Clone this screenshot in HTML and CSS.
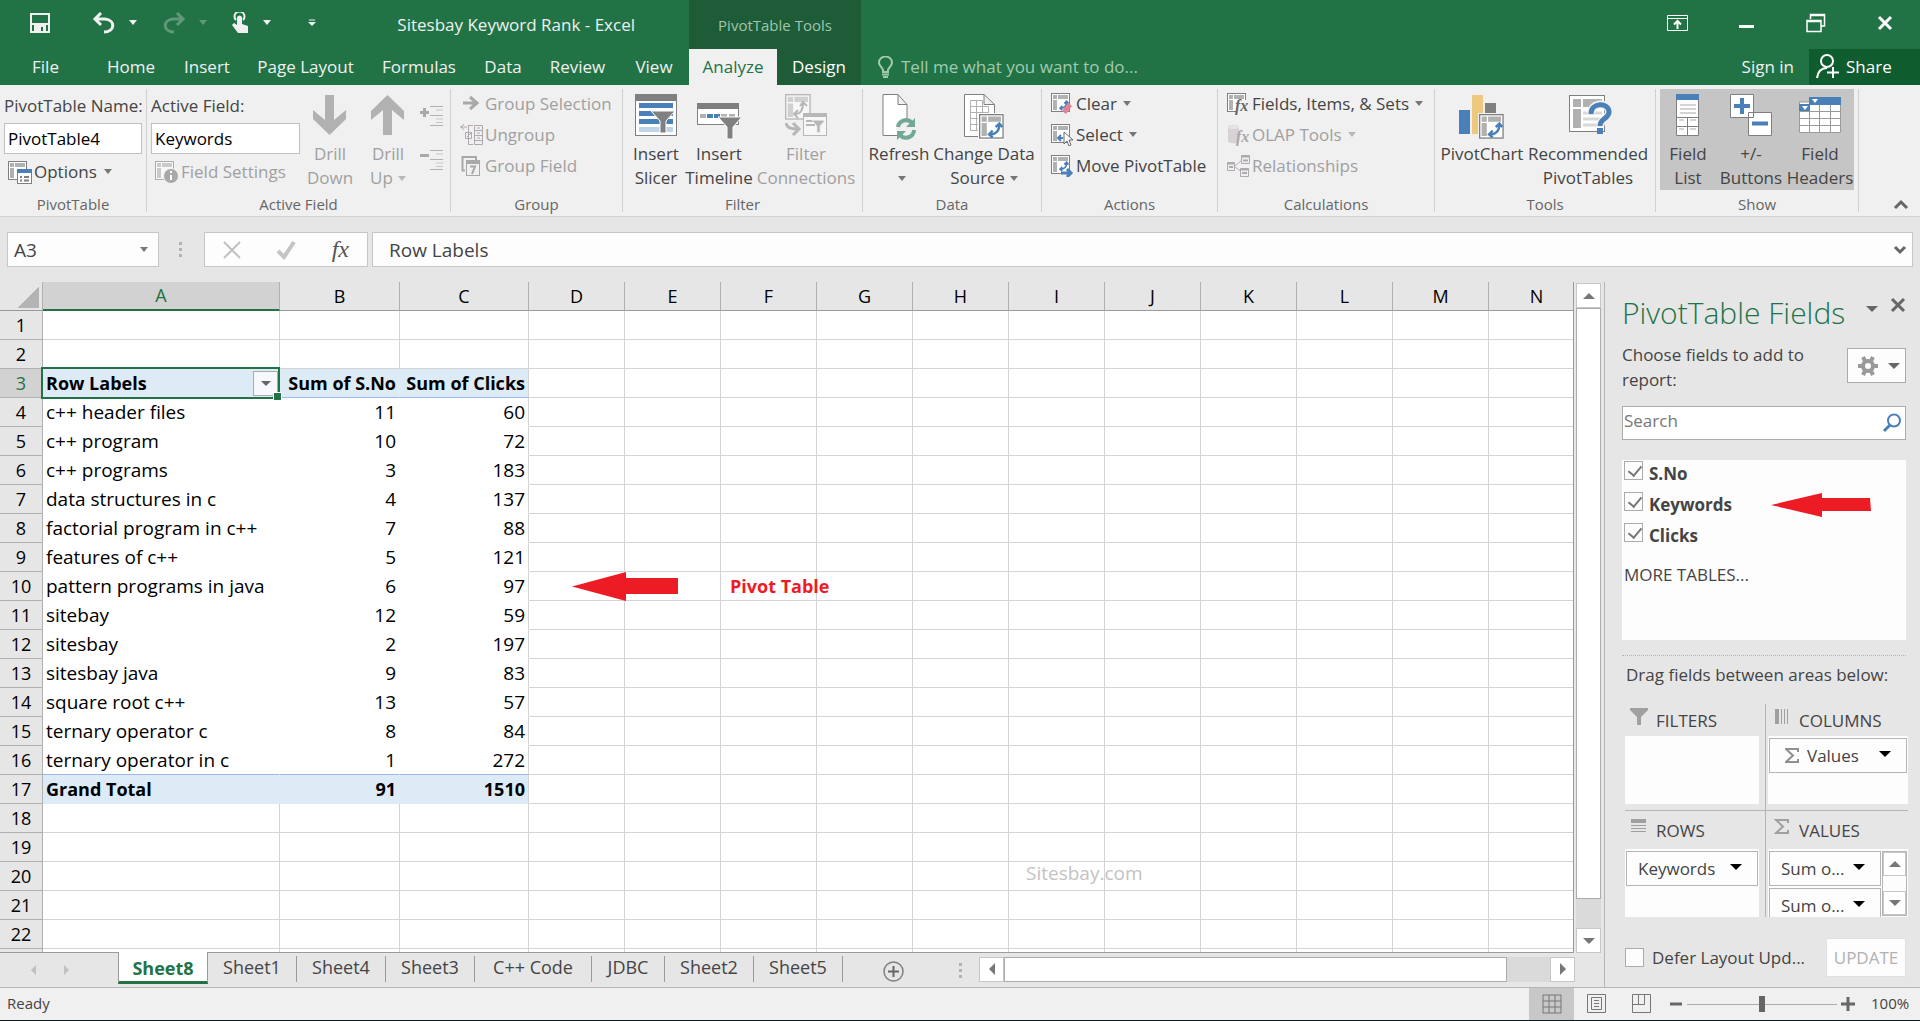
FILE: index.html
```html
<!DOCTYPE html>
<html lang="en">

<head>
    <meta charset="UTF-8">
    <meta name="viewport" content="width=device-width, initial-scale=1.0">
    <title>Sitesbay Keyword Rank - Excel</title>
    <link rel="stylesheet" href="styles.css">
</head>

<body>
    <!-- shared icon parts -->
    <svg class="defs" width="0" height="0">
        <symbol id="pivot" viewBox="0 0 20 20">
            <rect x="0.5" y="0.5" width="18" height="18" fill="#fff" stroke="#7f7f7f" />
            <path d="M2 2h4v4h-4zM7 2h10v4h-10zM2 7h4v10h-4z" fill="#b1b1b1" />
        </symbol>
        <symbol id="swap" viewBox="0 0 14 14">
            <path d="M3 11C8 11 11 8 11 3M5.500 8L2.500 11L5.500 13.500M8 5L11 2L13.500 5" fill="none" stroke="#4a80b8" stroke-width="2" />
        </symbol>
        <symbol id="funnel" viewBox="0 0 24 24">
            <path d="M0 1H24L15 11V23H9V11Z" fill="#808080" stroke="#fff" stroke-width="1" />
        </symbol>
    </svg>

    <header class="titlebar">
        <div class="quick">
            <button class="qbtn save" aria-label="Save"><svg width="20" height="20"><path d="M1 1H19V19H1ZM1 11H19" fill="none" stroke="#f0f0f0" stroke-width="2" /><path d="M4 12H16V19H13V14H11V19H4Z" fill="#f0f0f0" /></svg></button>
            <button class="qbtn" aria-label="Undo"><svg width="24" height="22"><path d="M3 7H13C24 8 23 20 12 20M9 1L3 7L9 13" fill="none" stroke="#f0f0f0" stroke-width="3" /></svg><i class="caret"></i></button>
            <button class="qbtn faded" aria-label="Redo"><svg width="24" height="22"><path d="M21 7H11C0 8 1 20 12 20M15 1L21 7L15 13" fill="none" stroke="#f0f0f0" stroke-width="3" /></svg><i class="caret"></i></button>
            <button class="qbtn" aria-label="Touch mode"><svg width="18" height="22"><path d="M4 8A5 5 0 1 1 11 8" fill="none" stroke="#f0f0f0" stroke-width="2" /><path d="M5 5Q7.500 2 10 5V12L16 14V21H6L0 13L2 11L5 13Z" fill="#f0f0f0" /></svg><i class="caret"></i></button>
            <button class="qbtn more" aria-label="Customize toolbar"><svg width="8" height="8"><path d="M1 1H7" stroke="#f0f0f0" stroke-width="1" /><path d="M0 3H8L4 7Z" fill="#f0f0f0" /></svg></button>
            <span class="doc-title">Sitesbay Keyword Rank - Excel</span>
        </div>
        <div class="context">PivotTable Tools</div>
        <div class="window-buttons">
            <button aria-label="Ribbon display"><svg width="21" height="16"><path d="M0.500 0.500H20.500V15.500H0.500ZM0 3.500H20" fill="none" stroke="#fff" /><path d="M10.500 14V6M7 9.500L10.500 6L14 9.500" fill="none" stroke="#fff" stroke-width="2" /></svg></button>
            <button aria-label="Minimize"><svg width="20" height="20"><rect x="2" y="12" width="15" height="3" fill="#fff" /></svg></button>
            <button aria-label="Restore"><svg width="20" height="20"><path d="M4.500 6V1.500H18.500V13H15M1 7.500H15V18.500H1ZM4 2.500H18M1 8.500H15" fill="none" stroke="#fff" stroke-width="1.500" /></svg></button>
            <button aria-label="Close"><svg width="20" height="20"><path d="M4 4L16 16M16 4L4 16" stroke="#fff" stroke-width="3" /></svg></button>
        </div>
    </header>

    <nav class="tabs">
        <div class="tab-list">
            <button>File</button>
            <button>Home</button>
            <button>Insert</button>
            <button>Page Layout</button>
            <button>Formulas</button>
            <button>Data</button>
            <button>Review</button>
            <button>View</button>
            <button class="current">Analyze</button>
            <button class="contextual">Design</button>
        </div>
        <label class="tell-me"><svg width="15" height="22"><path d="M5 16V14C4 11 1 10 1 6.500A6 5.500 0 0 1 14 6.500C14 10 11 11 10 14V16Z" fill="none" stroke="#a0cbb0" stroke-width="2" /><path d="M4 18.500H11M5 21H10" stroke="#a0cbb0" stroke-width="2" /></svg><input type="text" placeholder="Tell me what you want to do..."></label>
        <button class="sign-in">Sign in</button>
        <button class="share"><svg width="24" height="25"><ellipse cx="11" cy="7" rx="6" ry="6" fill="none" stroke="#fff" stroke-width="2" /><path d="M1 24C2 17 5 14 11 14M17 13V24M11 18.500H23" fill="none" stroke="#fff" stroke-width="2" /></svg>Share</button>
    </nav>

    <section class="ribbon">
        <div class="group g-pivot">
            <div class="body">
                <div class="stack">
                    <label for="pt-name">PivotTable Name:</label>
                    <input id="pt-name" type="text" value="PivotTable4">
                    <button class="small"><svg width="24" height="24"><use href="#pivot" width="20" height="22" /><rect x="9.500" y="9.500" width="14" height="14" fill="#fff" stroke="#7f7f7f" /><rect x="9" y="9" width="15" height="4" fill="#4a80b8" /><path d="M12 17H14M16 17H21M12 20.500H14M16 20.500H21" stroke="#7f7f7f" stroke-width="2" /></svg>Options<i class="caret"></i></button>
                </div>
            </div>
            <h2>PivotTable</h2>
        </div>

        <div class="group g-active">
            <div class="body">
                <div class="stack">
                    <label for="active-field">Active Field:</label>
                    <input id="active-field" type="text" value="Keywords">
                    <button class="small" disabled><svg width="24" height="24"><g opacity="0.6"><use href="#pivot" width="20" height="22" /></g><circle cx="16" cy="16" r="8" fill="#f0f0f0" /><circle cx="16" cy="16" r="7" fill="#a8a8a8" /><path d="M16 11V13M16 15V20" stroke="#fff" stroke-width="2" /></svg>Field Settings</button>
                </div>
                <button class="big w60" disabled><svg width="34" height="42"><path d="M12 1H21V26L33 16V25L16.500 41L0 25V16L12 26Z" fill="#b1b1b1" /></svg>Drill<br>Down</button>
                <button class="big w56" disabled><svg width="34" height="42"><path d="M12 41H21V16L33 26V17L16.500 1L0 17V26L12 16Z" fill="#b1b1b1" /></svg>Drill<br>Up<i class="caret"></i></button>
                <div class="levels">
                    <button aria-label="Expand field" disabled><svg width="24" height="20"><path d="M0 6.500H9M4.500 2V11" stroke="#a8a8a8" stroke-width="3" /><path d="M10 0.500H23M10 9.500H23M10 19.500H23" stroke="#b1b1b1" /><path d="M16 4H23M16 13H23M16 16.500H23" stroke="#c8c8c8" /></svg></button>
                    <button aria-label="Collapse field" disabled><svg width="24" height="20"><path d="M0 5.500H9" stroke="#a8a8a8" stroke-width="3" /><path d="M10 0.500H23M10 9.500H23M10 19.500H23" stroke="#b1b1b1" /><path d="M16 4H23M16 13H23M16 16.500H23" stroke="#c8c8c8" /></svg></button>
                </div>
            </div>
            <h2>Active Field</h2>
        </div>

        <div class="group g-group">
            <div class="body rows">
                <button class="small" disabled><svg width="24" height="22"><path d="M3 10H17M10 4L17 10L10 16" fill="none" stroke="#a8a8a8" stroke-width="3" /></svg>Group Selection</button>
                <button class="small" disabled><svg width="24" height="22"><path d="M0 3H7M4 0L1 3L4 6M8 1.500H13M8.500 1V20.500H13M5.500 8.500H11.500V14.500H5.500ZM7 13L11 9M14.500 1.500H22.500V20.500H14.500ZM14 6.500H22M14 11.500H22M14 16.500H22M17 4H20M17 9H20M17 14H20" fill="none" stroke="#b0a8b0" /></svg>Ungroup</button>
                <button class="small" disabled><svg width="24" height="22"><path d="M2.500 1V15.500H5M2 2H16V5" fill="none" stroke="#a8a8a8" stroke-width="2" /><rect x="6.500" y="5.500" width="13" height="15" fill="#f0f0f0" stroke="#a8a8a8" /><rect x="6" y="5" width="14" height="4" fill="#a8a8a8" /><path d="M10 11.500H15L12 19" fill="none" stroke="#a8a8a8" stroke-width="2" /></svg>Group Field</button>
            </div>
            <h2>Group</h2>
        </div>

        <div class="group g-filter">
            <div class="body">
                <button class="big w56"><svg width="42" height="44"><rect x="0.500" y="0.500" width="41" height="41" fill="#fff" stroke="#7f7f7f" /><rect width="42" height="7" fill="#7f7f7f" /><path d="M4 11.500H38M4 19.500H38M4 27.500H38" stroke="#4a80b8" stroke-width="5" /><path d="M4 35.500H38" stroke="#c0d4e8" stroke-width="5" /><use href="#funnel" x="16" y="16" width="24" height="24" /></svg>Insert<br>Slicer</button>
                <button class="big w70"><svg width="44" height="48"><rect x="0.500" y="9.500" width="41" height="21" fill="#fff" stroke="#7f7f7f" /><rect y="9" width="42" height="6" fill="#7f7f7f" /><path d="M3 22H9M24 22H30M32 22H38" stroke="#b1b1b1" stroke-width="4" /><path d="M10 22H16M17 22H23" stroke="#4a80b8" stroke-width="4" /><use href="#funnel" x="21" y="22" width="24" height="24" /></svg>Insert<br>Timeline</button>
                <button class="big w104" disabled><svg width="42" height="42" class="pale"><use href="#pivot" width="27" height="27" /><path d="M10 20C16 20 18 16 18 9M13 16L9 20L13 24M15 12L18 8L22 12" fill="none" stroke="#808080" stroke-width="2" /><rect x="18.500" y="19.500" width="23" height="22" fill="#fff" stroke="#7f7f7f" /><rect x="18" y="19" width="24" height="4" fill="#7f7f7f" /><path d="M21 27H38M21 31H30" stroke="#7f7f7f" stroke-width="2" /><use href="#funnel" x="27" y="26" width="13" height="13" /><path d="M1 29C2 34 6 35 14 35M8 29L14 35L8 41" fill="none" stroke="#7f7f7f" stroke-width="3" /></svg>Filter<br>Connections</button>
            </div>
            <h2>Filter</h2>
        </div>

        <div class="group g-data">
            <div class="body">
                <button class="big w62"><svg width="34" height="46"><path d="M1 0.500H16L25 10.500V41.500H1ZM16 0.500V10.500H25" fill="#fff" stroke="#7f7f7f" /><circle cx="24" cy="35" r="10" fill="#f0f0f0" /><path d="M16 33A8 8 0 0 1 30 29M32 36A8 8 0 0 1 18 41" fill="none" stroke="#72a896" stroke-width="4" /><path d="M33 24V33H24ZM15 46V37H24Z" fill="#72a896" /></svg>Refresh<br><i class="caret"></i></button>
                <button class="big w108"><svg width="40" height="46"><path d="M0.500 0.500H20L30.500 10.500V42.500H0.500ZM20 0.500V10.500H30" fill="#fff" stroke="#7f7f7f" /><path d="M6.500 6.500H18.500V36.500H6.500ZM6 12.500H24.500V36M6 18.500H24M6 24.500H24M6 30.500H24M12.500 6V36" fill="none" stroke="#b1b1b1" /><rect x="14" y="19" width="26" height="27" fill="#fff" /><use href="#pivot" x="15" y="20" width="26" height="26" /><use href="#swap" x="22" y="27" width="17" height="17" /></svg>Change Data<br>Source<i class="caret"></i></button>
            </div>
            <h2>Data</h2>
        </div>

        <div class="group g-actions">
            <div class="body rows">
                <button class="small"><svg width="24" height="22"><use href="#pivot" width="20" height="20" /><use href="#swap" x="7" y="6" width="11" height="12" /><path d="M11 18L17 10L21 13L15 21Z" fill="#e68094" /></svg>Clear<i class="caret"></i></button>
                <button class="small"><svg width="24" height="22"><use href="#pivot" width="20" height="20" /><path d="M12 14H7M10 11L7 14L10 17" fill="none" stroke="#4a80b8" stroke-width="2" /><path d="M13 8V20L16 17L18 22L20 21L18 16H22Z" fill="#fff" stroke="#666" /></svg>Select<i class="caret"></i></button>
                <button class="small"><svg width="24" height="22"><use href="#pivot" width="20" height="20" /><use href="#swap" x="7" y="5" width="11" height="12" /><path d="M10 18H20M16 14L20 18L16 22" fill="none" stroke="#4a80b8" stroke-width="3" /></svg>Move PivotTable</button>
            </div>
            <h2>Actions</h2>
        </div>

        <div class="group g-calc">
            <div class="body rows">
                <button class="small"><svg width="24" height="22"><use href="#pivot" width="20" height="20" /><rect x="9" y="7" width="12" height="14" fill="#f0f0f0" /><text x="8" y="18" class="fx">fx</text></svg>Fields, Items, &amp; Sets<i class="caret"></i></button>
                <button class="small" disabled><svg width="24" height="22"><path d="M1 3C1 0 12 0 12 3V17C12 20 1 20 1 17Z" fill="#d6d2d6" /><ellipse cx="6.500" cy="3" rx="5.500" ry="2" fill="#e6e2e6" /><text x="9" y="18" class="fx">fx</text></svg>OLAP Tools<i class="caret"></i></button>
                <button class="small" disabled><svg width="24" height="22"><path d="M8 11L15 5M8 12L15 17" stroke="#b8b0b8" /><path d="M0.500 7.500H7.500V15.500H0.500ZM14.500 0.500H22.500V8.500H14.500ZM13.500 13.500H21.500V21.500H13.500Z" fill="#f0f0f0" stroke="#b0a8b0" /><path d="M0 8.500H8M14 1.500H23M13 14.500H22M2 12H6M16 5.500H21M15 18H20" stroke="#b0a8b0" stroke-width="2" /></svg>Relationships</button>
            </div>
            <h2>Calculations</h2>
        </div>

        <div class="group g-tools">
            <div class="body">
                <button class="big w86"><svg width="46" height="46"><rect y="16" width="11" height="24" fill="#4a80b8" /><rect x="13" y="1" width="11" height="39" fill="#edc87e" /><rect x="26" y="9" width="11" height="12" fill="#808080" /><rect x="19" y="19" width="26" height="27" fill="#f0f0f0" /><use href="#pivot" x="20" y="20" width="26" height="26" /><use href="#swap" x="27" y="27" width="17" height="17" /></svg>PivotChart<br>&nbsp;</button>
                <button class="big w126"><svg width="38" height="46"><rect x="0.500" y="1.500" width="35" height="36" fill="#fff" stroke="#7f7f7f" /><path d="M4 5H12V13H4ZM14 5H33V13H14ZM4 15H12V34H4Z" fill="#b1b1b1" /><path d="M14 19H33M14 25H33M14 31H30" stroke="#d8d8d8" stroke-width="3" /></svg>Recommended<br>PivotTables
                    <svg class="question" width="26" height="34"><path d="M4 14C4 1 22 2 22 12C22 19 13 18 13 27" fill="none" stroke="#f0f0f0" stroke-width="8" /><path d="M4 14C4 2 22 2 22 12C22 19 13 18 13 26" fill="none" stroke="#4a80b8" stroke-width="5" /><rect x="10" y="28" width="6" height="6" fill="#4a80b8" /></svg></button>
            </div>
            <h2>Tools</h2>
        </div>

        <div class="group g-show">
            <div class="body">
                <button class="big toggled w56"><svg width="24" height="42"><path d="M0.500 0.500H22.500V41.500H0.500ZM0 23.500H22M0 32.500H22M11.500 24V41" fill="#fff" stroke="#7f7f7f" /><rect width="23" height="6" fill="#4a80b8" /><path d="M4 11H20M4 15H20M4 19H20M3 26H8M14 26H20M3 35H8M14 35H20" stroke="#a8a8a8" /></svg>Field<br>List</button>
                <button class="big toggled w70"><svg width="42" height="42"><path d="M0.500 0.500H23.500V23.500H0.500ZM18.500 18.500H41.500V41.500H18.500Z" fill="#fff" stroke="#7f7f7f" /><path d="M4 12H20M12 4V20M22 29.500H38" stroke="#4a80b8" stroke-width="4" /></svg>+/-<br>Buttons</button>
                <button class="big toggled w68"><svg width="42" height="42"><path d="M0.500 8V38.500H41.500V4H10.500V8ZM0 17.500H41M0 24.500H41M0 31.500H41M10.500 10V38M20.500 10V38M31.500 10V38" fill="#fff" stroke="#9a9a9a" /><path d="M10 3H42V11H11V17H0V10H10Z" fill="#4a80b8" /><path d="M13 5H19L16 9ZM3 12H9L6 16Z" fill="#fff" /></svg>Field<br>Headers</button>
            </div>
            <h2>Show</h2>
        </div>
        <button class="collapse" aria-label="Collapse ribbon"><svg width="16" height="12"><path d="M2 9L8 3L14 9" fill="none" stroke="#666" stroke-width="3" /></svg></button>
    </section>

    <section class="formula-bar">
        <div class="name-box">
            <input type="text" value="A3" aria-label="Name box">
            <button aria-label="Names"><i class="caret"></i></button>
        </div>
        <i class="dots"></i>
        <div class="formula-tools">
            <button aria-label="Cancel"><svg width="18" height="18"><path d="M1 1L17 17M17 1L1 17" stroke="#c0c0c0" stroke-width="2" /></svg></button>
            <button aria-label="Enter"><svg width="20" height="20"><path d="M2 11L8 17L18 2" fill="none" stroke="#c4c4c4" stroke-width="4" /></svg></button>
            <button class="insert-fx" aria-label="Insert function"><i>fx</i></button>
        </div>
        <div class="formula">
            <input type="text" value="Row Labels" aria-label="Formula">
            <button aria-label="Expand formula bar"><svg width="14" height="10"><path d="M2 2L7 7L12 2" fill="none" stroke="#666" stroke-width="3" /></svg></button>
        </div>
    </section>

    <main class="workspace">
        <div class="book">
            <div class="sheet-row">
                <div class="sheet">
                    <table class="grid">
                        <colgroup>
                            <col class="c-head"><col class="c-a"><col class="c-b"><col class="c-c">
                            <col span="11">
                        </colgroup>
                        <thead>
                            <tr id="letters"></tr>
                        </thead>
                        <tbody id="cells"></tbody>
                    </table>
                    <svg class="arrow-sheet" width="106" height="30"><path d="M0 14.500L54 0V6H106V22H54V29Z" fill="#ed1c24" /></svg>
                    <b class="note">Pivot Table</b>
                    <span class="watermark">Sitesbay.com</span>
                </div>
                <div class="vscroll">
                    <button aria-label="Scroll up"><i class="tri up"></i></button>
                    <div class="thumb"></div>
                    <button aria-label="Scroll down"><i class="tri down"></i></button>
                </div>
            </div>
            <div class="sheet-tabs">
                <div class="tab-nav"><i class="tri left"></i><i class="tri right"></i></div>
                <button class="active">Sheet8</button>
                <button>Sheet1</button>
                <button>Sheet4</button>
                <button>Sheet3</button>
                <button class="wide">C++ Code</button>
                <button class="narrow">JDBC</button>
                <button>Sheet2</button>
                <button>Sheet5</button>
                <button class="add" aria-label="New sheet"><svg width="21" height="21"><circle cx="10.500" cy="10.500" r="9.500" fill="none" stroke="#808080" stroke-width="1.500" /><path d="M5 10.500H16M10.500 5V16" stroke="#666" stroke-width="2" /></svg></button>
                <i class="dots"></i>
                <div class="hscroll">
                    <button aria-label="Scroll left"><i class="tri left"></i></button>
                    <div class="thumb"></div>
                    <button aria-label="Scroll right"><i class="tri right"></i></button>
                </div>
            </div>
        </div>

        <aside class="pane">
            <div class="pane-head">
                <h1>PivotTable Fields</h1>
                <button aria-label="Pane options"><i class="caret"></i></button>
                <button aria-label="Close pane"><svg width="16" height="16"><path d="M2 2L14 14M14 2L2 14" stroke="#666" stroke-width="3" /></svg></button>
            </div>
            <div class="choose">
                <p>Choose fields to add to report:</p>
                <button class="gear" aria-label="Tools"><svg width="20" height="20"><circle cx="10" cy="10" r="5" fill="none" stroke="#9a9a9a" stroke-width="4" /><path d="M0 10H4M16 10H20M5 1L7 5M15 1L13 5M5 19L7 15M15 19L13 15" stroke="#9a9a9a" stroke-width="4" /></svg><i class="caret"></i></button>
            </div>
            <label class="search"><input type="text" placeholder="Search"><svg width="20" height="20"><circle cx="12" cy="7.500" r="6" fill="none" stroke="#4a80b8" stroke-width="2" /><path d="M8 12L2 18" stroke="#4a80b8" stroke-width="3" /></svg></label>
            <div class="field-list">
                <label><input type="checkbox" checked>S.No</label>
                <label><input type="checkbox" checked>Keywords</label>
                <label><input type="checkbox" checked>Clicks</label>
                <a href="#">MORE TABLES...</a>
                <svg class="arrow-pane" width="100" height="24"><path d="M0 12L51 0V5H99L100 18H51V24Z" fill="#ed1c24" /></svg>
            </div>
            <p class="drag">Drag fields between areas below:</p>
            <div class="areas">
                <div class="area">
                    <h3><svg width="20" height="18"><path d="M1 0H19V2L12 9V17H8V9L1 2Z" fill="#a0a0a0" /></svg>FILTERS</h3>
                    <div class="drop"></div>
                </div>
                <div class="area">
                    <h3><svg width="16" height="18"><path d="M1 1H5V16H1Z" fill="#a0a0a0" /><path d="M7.500 1V16M10.500 1V16M13.500 1V16" stroke="#a0a0a0" /></svg>COLUMNS</h3>
                    <div class="drop"><button class="item"><svg width="14" height="16"><path d="M13 4V1H1L8 7.500L1 14H13V11" fill="none" stroke="#909090" stroke-width="2" /></svg>Values<i class="caret"></i></button></div>
                </div>
                <div class="area">
                    <h3><svg width="20" height="18"><path d="M2 1H17V5H2Z" fill="#a0a0a0" /><path d="M2 7.500H17M2 10.500H17M2 13.500H17" stroke="#a0a0a0" /></svg>ROWS</h3>
                    <div class="drop"><button class="item">Keywords<i class="caret"></i></button></div>
                </div>
                <div class="area">
                    <h3><svg width="16" height="18"><path d="M14 5V2H2L9 8.500L2 15H14V12" fill="none" stroke="#a0a0a0" stroke-width="2" /></svg>VALUES</h3>
                    <div class="drop scrolls">
                        <div><button class="item">Sum o...<i class="caret"></i></button><button class="item">Sum o...<i class="caret"></i></button></div>
                        <div class="mini-scroll"><button aria-label="Up"><i class="tri up"></i></button><div></div><button aria-label="Down"><i class="tri down"></i></button></div>
                    </div>
                </div>
            </div>
            <div class="defer">
                <label><input type="checkbox">Defer Layout Upd...</label>
                <button disabled>UPDATE</button>
            </div>
        </aside>
    </main>

    <footer class="status">
        <span class="ready">Ready</span>
        <button class="view on" aria-label="Normal"><svg width="20" height="20"><path d="M1 1H19V19H1ZM1 7H19M1 13H19M7 1V19M13 1V19" fill="none" stroke="#777" /></svg></button>
        <button class="view" aria-label="Page layout"><svg width="20" height="20"><path d="M0.500 0.500H18.500V18.500H0.500ZM4.500 3.500H14.500V15.500H4.500ZM7 6.500H12M7 9.500H12M7 12.500H12" fill="none" stroke="#777" /></svg></button>
        <button class="view" aria-label="Page break"><svg width="20" height="20"><path d="M0.500 0.500H18.500V18.500H0.500ZM0 10.500H12.500V0M6.500 0V10" fill="none" stroke="#777" /></svg></button>
        <div class="zoom">
            <button aria-label="Zoom out"><svg width="14" height="14"><path d="M1 7H13" stroke="#666" stroke-width="3" /></svg></button>
            <input type="range" min="0" max="200" value="100" aria-label="Zoom">
            <button aria-label="Zoom in"><svg width="14" height="14"><path d="M0 7H14M7 0V14" stroke="#666" stroke-width="3" /></svg></button>
        </div>
        <span class="percent">100%</span>
    </footer>

    <script>
        const data = {
            3: ["Row Labels", "Sum of S.No", "Sum of Clicks"],
            4: ["c++ header files", 11, 60],
            5: ["c++ program", 10, 72],
            6: ["c++ programs", 3, 183],
            7: ["data structures in c", 4, 137],
            8: ["factorial program in c++", 7, 88],
            9: ["features of c++", 5, 121],
            10: ["pattern programs in java", 6, 97],
            11: ["sitebay", 12, 59],
            12: ["sitesbay", 2, 197],
            13: ["sitesbay java", 9, 83],
            14: ["square root c++", 13, 57],
            15: ["ternary operator c", 8, 84],
            16: ["ternary operator in c", 1, 272],
            17: ["Grand Total", 91, 1510]
        };
        const letters = "ABCDEFGHIJKLMN";

        let head = '<th class="corner"></th>';
        for (const letter of letters) {
            head += `<th class="${letter === "A" ? "picked" : ""}">${letter}</th>`;
        }
        document.getElementById("letters").innerHTML = head;

        let rows = "";
        for (let r = 1; r <= 23; r++) {
            let type = "";
            if (r > 3 && r < 17) type = "pivot";
            if (r === 3) type = "labels";
            if (r === 17) type = "total";
            rows += `<tr class="${type}"><th>${r < 23 ? r : ""}</th>`;
            for (let c = 0; c < letters.length; c++) {
                const value = data[r] && c < 3 ? data[r][c] : "";
                if (r === 3 && c === 0) {
                    rows += `<td class="selected">${value}<button aria-label="Filter"><i class="caret"></i></button></td>`;
                } else {
                    rows += `<td>${value}</td>`;
                }
            }
            rows += "</tr>";
        }
        document.getElementById("cells").innerHTML = rows;
    </script>
</body>

</html>
```

FILE: styles.css
```css
* {
    box-sizing: border-box;
}

body {
    display: flex;
    flex-direction: column;
    height: 100vh;
    margin: 0;
    overflow: hidden;
    font-family: "Open Sans", "Noto Sans", sans-serif;
    font-size: 17px;
    color: #444;
    background-color: #e6e6e6;
}

button,
input {
    margin: 0;
    padding: 0;
    border: 0;
    background: none;
    font: inherit;
    color: inherit;
    outline: none;
}

button {
    white-space: nowrap;
}

h1,
h2,
h3,
p {
    margin: 0;
    font-weight: normal;
}

svg {
    display: block;
    flex: none;
}

.defs {
    position: absolute;
}

.caret {
    display: inline-block;
    flex: none;
    border: 4px solid transparent;
    border-top: 5px solid currentColor;
    border-bottom: 0;
}

.tri {
    display: block;
    border: 6px solid transparent;
    color: #777;
}

.tri.up {
    border-top: 0;
    border-bottom-color: currentColor;
}

.tri.down {
    border-bottom: 0;
    border-top-color: currentColor;
}

.tri.left {
    border-left: 0;
    border-right-color: currentColor;
}

.tri.right {
    border-right: 0;
    border-left-color: currentColor;
}

.dots {
    width: 3px;
    height: 15px;
    background: repeating-linear-gradient(#b1b1b1 0 3px, transparent 3px 6px);
}

/* title bar */
.titlebar {
    display: grid;
    grid-template-columns: 689px 172px 1fr;
    flex: none;
    height: 49px;
    color: #f0f0f0;
    background-color: #217346;
}

.quick {
    display: flex;
    align-items: center;
    gap: 25px;
    padding: 0 54px 4px 30px;
}

.qbtn {
    display: flex;
    align-items: center;
    gap: 13px;
}

.qbtn.save {
    margin-right: 17px;
}

.qbtn.more {
    margin-left: 12px;
}

.qbtn.faded {
    opacity: 0.3;
}

.doc-title {
    margin-left: auto;
    padding-top: 4px;
}

.context {
    display: flex;
    align-items: center;
    justify-content: center;
    font-size: 15px;
    color: #9fc5ac;
    background-color: #1e5c38;
}

.window-buttons {
    display: flex;
    align-items: center;
    justify-content: flex-end;
    gap: 49px;
    padding: 0 25px 3px 0;
}

/* ribbon tabs */
.tabs {
    display: flex;
    flex: none;
    height: 36px;
    color: #f0f0f0;
    background-color: #217346;
}

.tab-list {
    display: grid;
    grid-template-columns: 91px 80px 72px 125px 102px 66px 83px 70px 88px 84px;
}

.tab-list button,
.tell-me input,
.sign-in {
    padding-bottom: 2px;
}

.tab-list .current {
    color: #217346;
    background-color: #f0f0f0;
}

.tab-list .contextual {
    color: #fff;
    background-color: #1e5c38;
}

.tell-me {
    display: flex;
    align-items: center;
    flex: 1;
    gap: 8px;
    padding-left: 17px;
}

.tell-me input {
    flex: 1;
}

.tell-me input::placeholder {
    color: #a0cbb0;
    opacity: 1;
}

.sign-in {
    padding-left: 15px;
    padding-right: 15px;
}

.share {
    display: flex;
    align-items: center;
    gap: 6px;
    width: 111px;
    padding: 0 0 2px 7px;
    color: #fff;
    background-color: #0f5c2f;
}

/* ribbon */
.ribbon {
    display: flex;
    flex: none;
    height: 132px;
    border-bottom: 1px solid #d2d2d2;
    background-color: #f0f0f0;
}

.group {
    display: flex;
    flex-direction: column;
    flex: none;
    margin: 4px 0;
    border-right: 1px solid #d0d0d0;
}

.group .body {
    display: flex;
    flex: none;
    height: 105px;
    padding: 0 4px;
}

.group .body.rows {
    flex-direction: column;
    padding-left: 9px;
}

.group h2 {
    font-size: 15px;
    line-height: 20px;
    text-align: center;
    color: #666;
}

.g-pivot { width: 147px; }
.g-active { width: 304px; }
.g-group { width: 172px; }
.g-filter { width: 240px; }
.g-data { width: 179px; }
.g-actions { width: 176px; }
.g-calc { width: 217px; }
.g-tools { width: 221px; }
.g-show { width: 203px; }

.g-filter .body,
.g-data .body {
    padding-left: 5px;
}

.stack {
    display: flex;
    flex-direction: column;
    align-items: flex-start;
    width: 100%;
}

.stack label {
    line-height: 34px;
    white-space: nowrap;
}

.stack input {
    width: 138px;
    height: 31px;
    padding-left: 3px;
    border: 1px solid #c0c0c0;
    color: #000;
    background-color: #fff;
}

.g-active .stack,
.g-active .stack input {
    width: 149px;
}

.small {
    display: flex;
    align-items: center;
    gap: 1px;
    height: 31px;
    padding-bottom: 2px;
}

.small .caret {
    margin-left: 5px;
    color: #777;
}

.stack .small {
    gap: 2px;
    margin: 3px 0 0 4px;
}

.big {
    display: flow-root;
    position: relative;
    flex: none;
    height: 101px;
    line-height: 24px;
    text-align: center;
}

.big svg {
    height: 48px;
    margin: 5px auto 0;
}

.big .question {
    position: absolute;
    top: 11px;
    left: 62px;
    height: 34px;
    margin: 0;
}

.big .caret {
    margin-left: 5px;
    vertical-align: 3px;
    color: #777;
}

.small:disabled .caret,
.big:disabled .caret {
    color: #b8b8b8;
}

.w56 { width: 56px; }
.w60 { width: 60px; }
.w62 { width: 62px; }
.w68 { width: 68px; }
.w70 { width: 70px; }
.w86 { width: 86px; }
.w104 { width: 104px; }
.w108 { width: 108px; }
.w126 { width: 126px; }

.big.toggled {
    background-color: #c5c5c5;
}

.big:disabled,
.small:disabled {
    color: #a0a0a0;
}

.pale {
    opacity: 0.5;
}

.levels {
    display: flex;
    flex-direction: column;
    gap: 24px;
    padding: 17px 0 0 4px;
}

.fx {
    font: italic bold 16px "Liberation Serif", serif;
    fill: #666;
}

.small:disabled .fx {
    fill: #a8a8a8;
}

.collapse {
    align-self: flex-end;
    margin: 0 11px 5px auto;
}

/* formula bar */
.formula-bar {
    display: flex;
    align-items: center;
    flex: none;
    height: 65px;
    padding: 0 7px;
}

.name-box,
.formula-tools,
.formula {
    display: flex;
    align-items: center;
    height: 35px;
    border: 1px solid #c6c6c6;
    background-color: #fdfdfd;
    font-size: 19px;
}

.name-box {
    width: 152px;
    padding: 0 10px 0 6px;
}

.name-box input {
    flex: 1;
    min-width: 0;
}

.name-box .caret {
    display: block;
    color: #777;
}

.formula-bar .dots {
    margin: 0 22px 0 20px;
}

.formula-tools {
    justify-content: space-between;
    width: 164px;
    padding: 0 18px;
}

.insert-fx {
    font: 24px "Liberation Serif", serif;
    color: #555;
}

.formula {
    flex: 1;
    margin-left: 4px;
    padding: 0 5px 0 16px;
}

.formula input {
    flex: 1;
}

/* worksheet */
.workspace {
    display: flex;
    flex: 1;
    min-height: 0;
}

.book {
    display: flex;
    flex-direction: column;
    flex: 1;
    min-width: 0;
}

.sheet-row {
    display: flex;
    flex: 1;
    min-height: 0;
}

.sheet {
    position: relative;
    flex: 1;
    overflow: hidden;
    border-right: 1px solid #9b9b9b;
    border-bottom: 1px solid #9b9b9b;
    background-color: #fff;
}

.grid {
    width: 1585px;
    table-layout: fixed;
    border-collapse: separate;
    border-spacing: 0;
    font-size: 19px;
    color: #000;
}

.c-head { width: 43px; }
.c-a { width: 237px; }
.c-b { width: 120px; }
.c-c { width: 129px; }

.grid th,
.grid td {
    height: 29px;
    padding: 0 3px;
    border-right: 1px solid #d4d4d4;
    border-bottom: 1px solid #d4d4d4;
    line-height: 28px;
    white-space: nowrap;
}

.grid th {
    padding: 0;
    border-color: #b1b1b1;
    font-size: 18px;
    font-weight: normal;
    background-color: #e6e6e6;
}

.grid thead th {
    border-bottom-color: #9b9b9b;
    line-height: 27px;
}

.grid .corner {
    background: linear-gradient(135deg, #e6e6e6 50%, #b4b4b4 50%) 18px 5px / 21px 21px no-repeat #e6e6e6;
}

.grid .picked {
    border-bottom: 2px solid #217346;
    color: #217346;
    background-color: #d2d2d2;
}

.grid td:nth-child(3),
.grid td:nth-child(4) {
    text-align: right;
}

.pivot td:nth-child(-n+3),
.labels td:nth-child(-n+3),
.total td:nth-child(-n+3) {
    border-right-color: transparent;
}

.pivot td:nth-child(-n+4) {
    border-right-color: #fff;
    border-bottom-color: #fff;
}

.pivot td:nth-child(4) {
    border-right-color: #d4d4d4;
}

.labels td:nth-child(-n+4),
.total td:nth-child(-n+4) {
    font-size: 18px;
    font-weight: bold;
    background-color: #ddebf7;
}

.labels td:nth-child(-n+4),
.pivot:nth-child(16) td:nth-child(-n+4) {
    border-bottom-color: #9bb8e6;
}

.total td:nth-child(-n+4) {
    border-bottom-color: #ddebf7;
}

.labels th {
    color: #217346;
    background-color: #d2d2d2;
}

.grid .selected {
    position: relative;
}

.selected::before {
    content: "";
    position: absolute;
    inset: -2px -1px -2px -2px;
    border: 2px solid #217346;
}

.selected::after {
    content: "";
    position: absolute;
    right: -3px;
    bottom: -4px;
    width: 7px;
    height: 7px;
    border: 1px solid #fff;
    background-color: #217346;
}

.selected button {
    display: flex;
    align-items: center;
    justify-content: center;
    position: absolute;
    top: 2px;
    right: 1px;
    width: 25px;
    height: 25px;
    border: 1px solid #ababab;
    color: #666;
    background-color: #f6f8fb;
}

.selected .caret {
    border-width: 5px 5px 0;
}

.arrow-sheet {
    position: absolute;
    left: 572px;
    top: 290px;
}

.note {
    position: absolute;
    left: 730px;
    top: 292px;
    font-size: 18px;
    color: #ed1c24;
}

.watermark {
    position: absolute;
    left: 1026px;
    top: 578px;
    font-size: 19px;
    color: #c3c3c3;
}

/* scroll bars */
.vscroll {
    display: flex;
    flex-direction: column;
    width: 25px;
    margin: 1px 3px 0 2px;
    background-color: #dadada;
}

.vscroll button,
.hscroll button,
.mini-scroll button {
    display: flex;
    align-items: center;
    justify-content: center;
    flex: none;
    width: 25px;
    height: 25px;
    border: 1px solid #c6c6c6;
    background-color: #fff;
}

.thumb {
    flex: 1;
    border: 1px solid #ababab;
    background-color: #fff;
}

.vscroll .thumb {
    margin-bottom: 29px;
}

.sheet-tabs {
    display: flex;
    align-items: center;
    height: 34px;
}

.sheet-tabs > button {
    width: 89px;
    height: 26px;
    margin-bottom: 2px;
    padding-bottom: 4px;
    border-right: 1px solid #9b9b9b;
    font-size: 18px;
    line-height: 22px;
}

.sheet-tabs > button.wide {
    width: 117px;
}

.sheet-tabs > button.narrow {
    width: 73px;
}

.sheet-tabs > button.active {
    align-self: flex-start;
    width: 90px;
    height: 32px;
    margin: -1px 0 0;
    padding: 2px 0 0;
    border: 1px solid #9b9b9b;
    border-top: 0;
    border-bottom: 3px solid #217346;
    font-weight: bold;
    color: #217346;
    background-color: #fff;
    z-index: 1;
}

.tab-nav {
    display: flex;
    gap: 28px;
    width: 118px;
    padding-left: 31px;
}

.tab-nav .tri {
    border-width: 5px;
    color: #c0c0c0;
}

.tab-nav .left {
    border-left: 0;
    border-right-color: #c0c0c0;
}

.tab-nav .right {
    border-right: 0;
}

.sheet-tabs > button.add {
    width: 21px;
    height: 21px;
    margin: 2px 55px 0 40px;
    padding: 0;
    border: 0;
}

.hscroll {
    display: flex;
    flex: 1;
    margin: 0 29px 2px 17px;
    background-color: #dadada;
}

.hscroll .thumb {
    margin-right: 43px;
}

/* fields pane */
.pane {
    display: flex;
    flex-direction: column;
    width: 316px;
    padding: 0 14px 0 17px;
    border-left: 1px solid #b5b5b5;
}

.pane-head {
    display: flex;
    align-items: center;
    height: 60px;
    gap: 12px;
    color: #666;
}

.pane-head h1 {
    flex: 1;
    font-size: 30px;
    font-weight: 300;
    white-space: nowrap;
    color: #217346;
}

.pane-head button {
    margin-bottom: 14px;
}

.pane-head .caret,
.gear .caret,
.item .caret {
    border-width: 6px 6px 0;
}

.choose {
    display: flex;
    align-items: flex-start;
    justify-content: space-between;
    height: 64px;
}

.choose p {
    width: 200px;
    line-height: 25px;
}

.gear {
    display: flex;
    align-items: center;
    gap: 10px;
    height: 35px;
    margin-top: 6px;
    padding: 0 5px 0 10px;
    border: 1px solid #ababab;
    color: #666;
    background-color: #fdfdfd;
}

.search {
    display: flex;
    align-items: center;
    height: 34px;
    padding: 0 3px 0 1px;
    border: 1px solid #ababab;
    background-color: #fff;
}

.search input {
    flex: 1;
    min-width: 0;
    padding-bottom: 5px;
}

.search input::placeholder {
    color: #777;
    opacity: 1;
}

.field-list {
    position: relative;
    height: 180px;
    margin-top: 20px;
    padding: 0 2px;
    background-color: #fdfdfd;
}

.field-list label {
    display: flex;
    align-items: center;
    gap: 6px;
    height: 31px;
    padding-bottom: 4px;
    font-weight: bold;
}

input[type="checkbox"] {
    appearance: none;
    flex: none;
    width: 19px;
    height: 19px;
    border: 1px solid #ababab;
    background-color: #fdfdfd;
}

.field-list input {
    margin-bottom: 7px;
}

input[type="checkbox"]:checked::before {
    content: "";
    display: block;
    width: 6px;
    height: 11px;
    margin: 1px 0 0 6px;
    border: solid #777;
    border-width: 0 2px 2px 0;
    transform: rotate(40deg);
}

.field-list a {
    display: block;
    margin-top: 10px;
    color: #444;
    text-decoration: none;
}

.arrow-pane {
    position: absolute;
    left: 149px;
    top: 33px;
}

.drag {
    margin-top: 15px;
    padding: 7px 4px 0;
    border-top: 1px dotted #b5b5b5;
    white-space: nowrap;
}

.areas {
    display: grid;
    grid-template-columns: 141px 142px;
    margin: 18px 0 0 3px;
}

.area {
    padding: 0 6px 6px 0;
}

.area:nth-child(odd) {
    border-right: 1px solid #b5b5b5;
}

.area:nth-child(even) {
    padding: 0 0 6px 2px;
}

.area:nth-child(n+3) {
    padding-bottom: 0;
    border-top: 1px solid #b5b5b5;
}

.area h3 {
    display: flex;
    align-items: center;
    gap: 7px;
    height: 32px;
    padding-left: 4px;
    font-size: 17px;
}

.area:nth-child(n+3) h3 {
    height: 38px;
}

.area h3 svg {
    margin-bottom: 6px;
}

.area:nth-child(even) h3 {
    padding-left: 6px;
    gap: 9px;
}

.drop {
    height: 68px;
    padding: 2px 1px;
    overflow: hidden;
    background-color: #fdfdfd;
}

.item {
    display: flex;
    align-items: center;
    width: 100%;
    height: 35px;
    margin-bottom: 2px;
    padding: 0 15px 0 11px;
    border: 1px solid #b5b5b5;
    background-color: #fdfdfd;
}

.item svg {
    margin: 0 8px 0 4px;
}

.item .caret {
    margin: 0 0 4px auto;
    color: #000;
}

.scrolls {
    display: flex;
    gap: 1px;
}

.scrolls > div:first-child {
    flex: 1;
}

.mini-scroll {
    display: flex;
    flex-direction: column;
    justify-content: space-between;
    width: 25px;
    height: 65px;
    border: 1px solid #b5b5b5;
}

.mini-scroll button {
    width: 23px;
    height: 24px;
}

.defer {
    display: flex;
    align-items: center;
    justify-content: space-between;
    margin: 21px 0 0 3px;
    white-space: nowrap;
}

.defer label {
    display: flex;
    align-items: center;
    gap: 8px;
}

.defer button {
    width: 80px;
    height: 39px;
    border: 1px solid #e0e0e0;
    color: #b1b1b1;
    background-color: #fdfdfd;
}

/* status bar */
.status {
    display: flex;
    align-items: center;
    flex: none;
    height: 34px;
    border-top: 1px solid #b5b5b5;
    border-bottom: 1px solid #0a1a20;
    font-size: 15px;
    background-color: #f0f0f0;
}

.ready {
    flex: 1;
    padding: 0 0 2px 7px;
}

.view {
    display: flex;
    align-items: center;
    justify-content: center;
    width: 45px;
    height: 32px;
}

.view.on {
    background-color: #c8c8c8;
}

.zoom {
    display: flex;
    align-items: center;
    gap: 4px;
    padding-left: 5px;
}

.zoom input {
    appearance: none;
    width: 150px;
    height: 16px;
    background: linear-gradient(#ababab, #ababab) center / 100% 1px no-repeat;
}

.zoom input::-webkit-slider-thumb {
    appearance: none;
    width: 6px;
    height: 16px;
    background-color: #666;
}

.percent {
    width: 65px;
    padding: 0 0 2px 16px;
}
```
